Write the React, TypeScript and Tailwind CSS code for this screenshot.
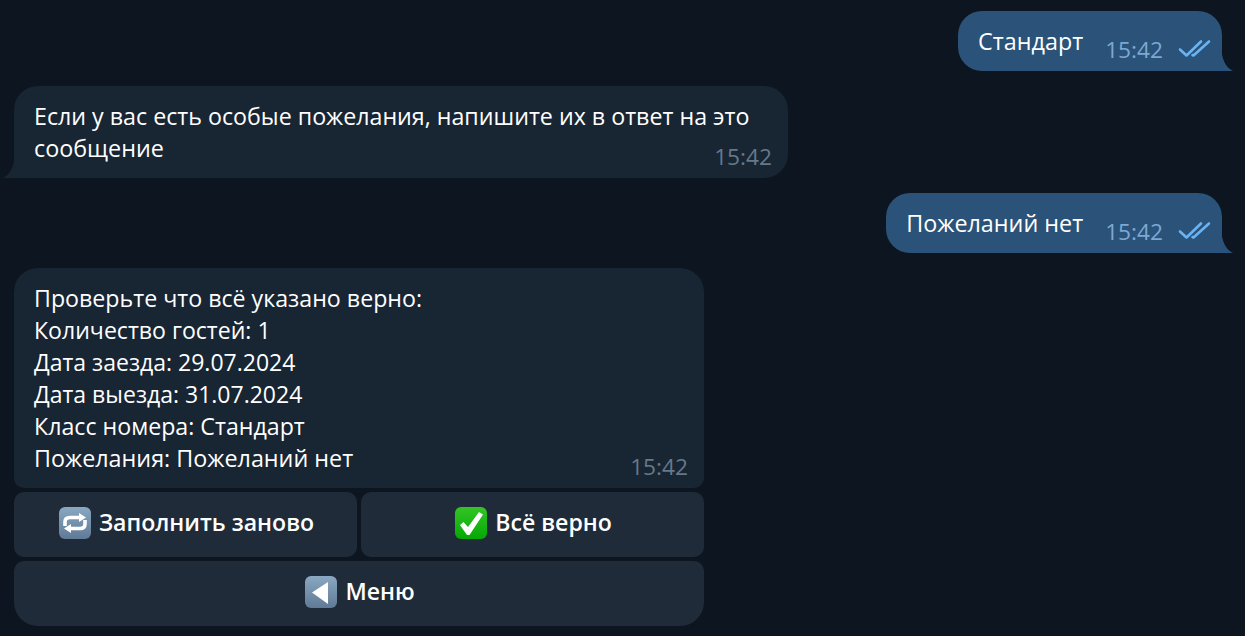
const font = "font-['Open_Sans','Noto_Sans',sans-serif]"

function DoubleCheck() {
  return (
    <svg viewBox="0 0 34 20" className="h-5 w-[34px]" fill="none" stroke="#6ab3f3" strokeWidth="2.600" strokeLinecap="round" strokeLinejoin="round">
      <path d="M2 10.500 L8.500 16.500 L23 2.500" />
      <path d="M14.500 16 L15.500 16.500 L31 2.500" />
    </svg>
  )
}

function TailRight() {
  return (
    <svg viewBox="0 0 12 24" className="absolute bottom-0 right-[-11px] h-6 w-3" fill="#2b5278">
      <path d="M0 0 C1 12 4 20 12 24 L0 24 Z" />
    </svg>
  )
}

function TailLeft() {
  return (
    <svg viewBox="0 0 12 24" className="absolute bottom-0 left-[-11px] h-6 w-3" fill="#182533">
      <path d="M12 0 C11 12 8 20 0 24 L12 24 Z" />
    </svg>
  )
}

function Sent({ text }: { text: string }) {
  return (
    <div className="relative flex h-[60px] self-end rounded-3xl rounded-br-none bg-[#2b5278] pl-5 pr-[10px]">
      <span className="mt-[14px] text-[23.33px] leading-8 text-white">{text}</span>
      <span className="ml-[22px] mt-[23px] text-[22.7px] leading-8 text-[#7da8d3]">15:42</span>
      <span className="ml-[15px] mt-[28px]">
        <DoubleCheck />
      </span>
      <TailRight />
    </div>
  )
}

function RepeatEmoji() {
  return (
    <svg viewBox="0 0 32 32" className="size-8 shrink-0">
      <defs>
        <linearGradient id="blueKey" x1="0" y1="0" x2="0" y2="1">
          <stop offset="0" stopColor="#8aa8c2" />
          <stop offset="1" stopColor="#5f7a96" />
        </linearGradient>
      </defs>
      <rect x="0" y="0" width="32" height="32" rx="6" fill="url(#blueKey)" />
      <path d="M6 19 V15 Q6 10.500 11 10.500 H21" fill="none" stroke="#fff" strokeWidth="3.600" />
      <path d="M20 6 L27 10.500 L20 15 Z" fill="#fff" />
      <path d="M26 13 V17 Q26 21.500 21 21.500 H11" fill="none" stroke="#fff" strokeWidth="3.600" />
      <path d="M12 17 L5 21.500 L12 26 Z" fill="#fff" />
    </svg>
  )
}

function CheckEmoji() {
  return (
    <svg viewBox="0 0 32 32" className="size-8 shrink-0">
      <defs>
        <linearGradient id="greenKey" x1="0" y1="0" x2="0" y2="1">
          <stop offset="0" stopColor="#35c426" />
          <stop offset="1" stopColor="#05a805" />
        </linearGradient>
      </defs>
      <rect x="0" y="0" width="32" height="32" rx="6" fill="url(#greenKey)" />
      <path d="M5 18 L8.500 15 L13 20 L24 5 L28 7.500 L14.500 28 H12 Z" fill="#fff" />
    </svg>
  )
}

function BackEmoji() {
  return (
    <svg viewBox="0 0 32 32" className="size-8 shrink-0">
      <defs>
        <linearGradient id="blueKey2" x1="0" y1="0" x2="0" y2="1">
          <stop offset="0" stopColor="#8aa8c2" />
          <stop offset="1" stopColor="#5f7a96" />
        </linearGradient>
      </defs>
      <rect x="0" y="0" width="32" height="32" rx="6" fill="url(#blueKey2)" />
      <path d="M7 16.500 L23 6 V28 Z" fill="#fff" />
    </svg>
  )
}

function KeyButton({ icon, label, className }: { icon: React.ReactNode; label: string; className: string }) {
  return (
    <div className={`flex h-[65px] items-center justify-center gap-2 bg-[#1f2b38] pb-1 pl-0.5 text-[23.1px] font-semibold text-white ${className}`}>
      {icon}
      <span>{label}</span>
    </div>
  )
}

export default function App() {
  return (
    <div className={`flex h-[636px] w-[1245px] flex-col gap-[15px] overflow-hidden bg-[#0d1620] pl-[14px] pr-[23px] pt-[11px] ${font}`}>
      <Sent text="Стандарт" />

      <div className="relative h-[92px] w-[774px] rounded-3xl rounded-bl-none bg-[#182533] px-5 pt-[14px] text-[23.23px] leading-8 text-white">
        <p>Если у вас есть особые пожелания, напишите их в ответ на это</p>
        <p className="w-fit text-[23.33px]">сообщение</p>
        <span className="absolute bottom-[5px] right-4 text-[22.7px] text-[#66788a]">15:42</span>
        <TailLeft />
      </div>

      <Sent text="Пожеланий нет" />

      <div className="flex w-[690px] flex-col gap-1">
        <div className="relative h-[220px] rounded-t-3xl rounded-b-[10px] bg-[#182533] px-5 pt-[14px] text-[23.2px] leading-8 text-white">
          <p>Проверьте что всё указано верно:</p>
          <p className="text-[23.1px]">Количество гостей: 1</p>
          <p className="text-[23px]">Дата заезда: 29.07.2024</p>
          <p className="text-[23px]">Дата выезда: 31.07.2024</p>
          <p>Класс номера: Стандарт</p>
          <p className="text-[23.33px]">Пожелания: Пожеланий нет</p>
          <span className="absolute bottom-[5px] right-4 text-[22.7px] text-[#66788a]">15:42</span>
        </div>
        <div className="flex gap-1">
          <KeyButton icon={<RepeatEmoji />} label="Заполнить заново" className="flex-1 rounded-[10px]" />
          <KeyButton icon={<CheckEmoji />} label="Всё верно" className="flex-1 rounded-[10px]" />
        </div>
        <KeyButton icon={<BackEmoji />} label="Меню" className="rounded-t-[10px] rounded-b-3xl" />
      </div>
    </div>
  )
}
